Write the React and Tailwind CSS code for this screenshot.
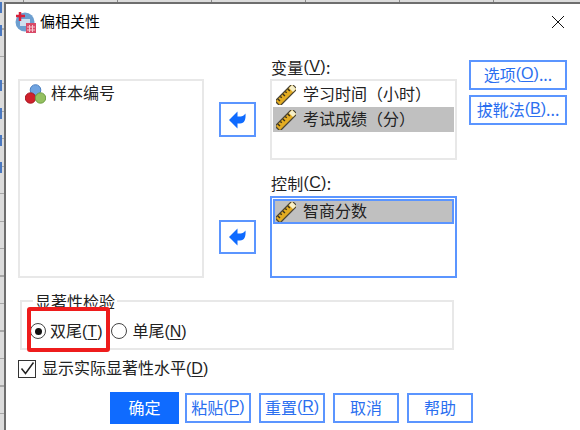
const font = { fontFamily: '"Noto Sans CJK SC", sans-serif' };

const marks = [0, 23, 78, 106, 133, 160];

function Ruler() {
  return (
    <svg width="20" height="20" viewBox="0 0 20 20" className="shrink-0">
      <g transform="rotate(-45 10 10)">
        <rect x="-2" y="6.500" width="24" height="7" fill="#e3ac22" stroke="#4a4436" strokeWidth="1.300" />
        <path d="M1.500 7v3M5 7v2M8.500 7v3M12 7v2M15.500 7v3" stroke="#3d3318" strokeWidth="1.400" />
        <rect x="17" y="7.200" width="4.500" height="5.600" fill="#f6efc8" />
      </g>
    </svg>
  );
}

function Balls() {
  return (
    <svg width="21" height="20" viewBox="0 0 21 20" className="shrink-0">
      <circle cx="10.500" cy="6" r="5.300" fill="#6fa3e0" stroke="#4a7fc0" />
      <circle cx="5.500" cy="14" r="5.200" fill="#d0202c" stroke="#a81822" />
      <circle cx="15.500" cy="14" r="5.200" fill="#94c060" stroke="#6f9e44" />
    </svg>
  );
}

function ArrowBtn({ className = "" }) {
  return (
    <button className={`w-[37px] border-2 border-[#5b95ff] flex items-center justify-center bg-white ${className}`}>
      <svg width="20" height="20" viewBox="0 0 20 20">
        <path d="M1 10 9.500 1.500v5h3c2 0 3.500-1 5-3 .5 6-1 10-5.500 10H9.500v5z" fill="#0f6bff" />
      </svg>
    </button>
  );
}

function Hot({ l }) {
  return (
    <span className="font-['Liberation_Sans']">
      (<span className="underline underline-offset-2">{l}</span>)
    </span>
  );
}

function Row({ text, selected, focused }) {
  return (
    <div
      className={`h-[25px] flex items-center gap-[7px] text-[16px] text-[#222] ${
        selected ? "bg-[#c0c0c0]" : ""
      } ${focused ? "border-2 border-[#5b95ff] pl-[1px]" : "pl-[3px]"}`}
    >
      <Ruler />
      <span className="whitespace-nowrap pb-[4px]">{text}</span>
    </div>
  );
}

function Btn({ children, className = "" }) {
  return (
    <button
      className={`border-2 border-[#5b95ff] bg-white text-[#2b6ff0] text-[16px] pb-[2px] flex items-center justify-center whitespace-nowrap ${className}`}
    >
      {children}
    </button>
  );
}

export default function App() {
  return (
    <div style={font} className="w-[580px] h-[430px] overflow-hidden bg-[#dcdcdc]">
      <div className="h-[2px] bg-[repeating-linear-gradient(90deg,#dcdcdc_0,#dcdcdc_23px,#8a8a8a_23px,#8a8a8a_24px,#dcdcdc_24px,#dcdcdc_94px)]" />
      <div className="flex">
        <div className="relative w-[4px] h-[428px] bg-[repeating-linear-gradient(180deg,#dcdcdc_0,#dcdcdc_26px,#a8a8a8_26px,#a8a8a8_27.500px)]">
          {marks.map((y) => (
            <div
              key={y}
              className="absolute left-0 w-[2px] h-[11px] bg-[#4a78c0]"
              style={{ top: y }}
            />
          ))}
        </div>

        <div className="w-[576px] h-[428px] bg-white border-l-2 border-t-2 border-[#6e6e6e]">
          <div className="h-[36px] flex items-center pl-[9px] pr-[15px]">
            <svg width="21" height="21" viewBox="0 0 21 21" className="shrink-0">
              <circle cx="10" cy="10" r="9.500" fill="#6d9fd0" />
              <rect x="5" y="7" width="10" height="7" fill="#cfe0f0" />
              <path d="M5 0v9M1 4h9" stroke="#d8203a" strokeWidth="2.500" />
              <rect x="11" y="11" width="10" height="10" fill="#d84a68" />
              <path d="M12 15h8M12 18h8M14.500 13v7M17.500 13v7" stroke="#f6c6d0" />
            </svg>
            <span className="ml-[4px] pb-[2px] text-[15px] text-black">偏相关性</span>
            <svg width="14" height="14" viewBox="0 0 14 14" className="ml-auto">
              <path d="M1 1l12 12M13 1L1 13" stroke="#111" strokeWidth="1" />
            </svg>
          </div>

          <div className="flex pl-[12px] mt-[20px]">
            <div className="w-[186px] h-[199px] mt-[19px] border-2 border-[#e8e8e8] pl-[5px]">
              <div className="flex items-center gap-[5px] h-[24px] mt-[1px] text-[16px] text-[#222]">
                <Balls />
                <span className="pb-[4px]">样本编号</span>
              </div>
            </div>

            <div className="w-[66px] pl-[15px] pt-[42px]">
              <ArrowBtn className="h-[35px]" />
              <ArrowBtn className="h-[34px] mt-[83px]" />
            </div>

            <div className="w-[187px]">
              <div className="h-[19px] pb-[6px] flex items-center pl-[1px] text-[16px] text-[#222] tracking-[0.3px] leading-none">
                变量<Hot l="V" />:
              </div>
              <div className="h-[81px] border-2 border-[#e8e8e8] p-[1px]">
                <Row text="学习时间（小时）" />
                <Row text="考试成绩（分）" selected />
              </div>
              <div className="h-[36px] pt-[9px] flex items-center pl-[1px] text-[16px] text-[#222] tracking-[0.3px] leading-none">
                控制<Hot l="C" />:
              </div>
              <div className="h-[82px] border-2 border-[#5b95ff] p-[1px]">
                <Row text="智商分数" selected focused />
              </div>
            </div>

            <div className="pl-[12px] flex flex-col gap-[5px]">
              <Btn className="w-[98px] h-[30px]">选项<Hot l="O" />...</Btn>
              <Btn className="w-[98px] h-[30px]">拔靴法<Hot l="B" />...</Btn>
            </div>
          </div>

          <div className="relative ml-[14px] mt-[22px] w-[434px] h-[50px] border-2 border-[#e8e8e8] flex items-center text-[16px] text-[#222]">
            <span className="absolute left-[11px] -top-[10px] bg-white px-[2px] leading-[18px]">
              显著性检验
            </span>
            <div className="ml-[8px] flex items-center gap-[4px] mt-[12px]">
              <span className="w-[16px] h-[16px] rounded-full border-[1.5px] border-[#444] flex items-center justify-center">
                <span className="w-[7px] h-[7px] rounded-full bg-[#111]" />
              </span>
              <span>
                双尾<Hot l="T" />
              </span>
            </div>
            <div className="ml-[9px] flex items-center gap-[5px] mt-[12px]">
              <span className="w-[16px] h-[16px] rounded-full border-[1.5px] border-[#444]" />
              <span>
                单尾<Hot l="N" />
              </span>
            </div>
            <div className="absolute left-[5px] top-[5px] w-[83px] h-[45px] border-[4px] border-[#ee1c1c] rounded-[3px]" />
          </div>

          <div className="ml-[12px] mt-[9px] h-[19px] flex items-center gap-[6px] text-[16px] text-[#222]">
            <span className="w-[18px] h-[18px] border-[1.5px] border-[#333] flex items-center justify-center">
              <svg width="15" height="15" viewBox="0 0 15 15">
                <path d="M1.500 7.500l4 5 8-11" fill="none" stroke="#222" strokeWidth="1.500" />
              </svg>
            </span>
            <span className="whitespace-nowrap pb-[2px]">
              显示实际显著性水平<Hot l="D" />
            </span>
          </div>

          <div className="ml-[104px] mt-[14px] flex items-center gap-[6px]">
            <button className="w-[69px] h-[32px] bg-[#0f6bff] text-white text-[16px] pb-[2px]">确定</button>
            <Btn className="w-[66px] h-[30px]">粘贴<Hot l="P" /></Btn>
            <Btn className="w-[66px] h-[30px] ml-[2px]">重置<Hot l="R" /></Btn>
            <Btn className="w-[66px] h-[30px] ml-[2px]">取消</Btn>
            <Btn className="w-[66px] h-[30px] ml-[2px]">帮助</Btn>
          </div>
        </div>
      </div>
    </div>
  );
}
